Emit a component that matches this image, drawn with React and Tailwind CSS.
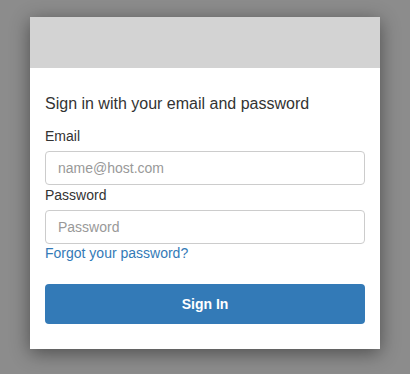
export default function App() {
  return (
    <div className="w-[410px] h-[374px] bg-[#8c8c8c] pt-[17px] pl-[30px]" style={{ fontFamily: '"Liberation Sans", Arial, sans-serif' }}>
      <div className="w-[350px] h-[332px] bg-white shadow-[0_4px_18px_rgba(0,0,0,0.45)] flex flex-col">
        <div className="h-[51px] bg-[#d3d3d3]"></div>
        <div className="px-[15px] pt-[26px] text-[#333]">
          <h2 className="text-[16px] leading-[20px] mb-[13px]">Sign in with your email and password</h2>
          <label className="block text-[14px] leading-[18px] mb-[6px]">Email</label>
          <input
            className="block w-[320px] h-[34px] border border-[#ccc] rounded-[4px] px-[12px] text-[14px] placeholder-[#999] outline-none"
            placeholder="name@host.com"
          />
          <label className="block text-[14px] leading-[18px] mt-[1px] mb-[6px]">Password</label>
          <input
            type="password"
            className="block w-[320px] h-[34px] border border-[#ccc] rounded-[4px] px-[12px] text-[14px] placeholder-[#999] outline-none"
            placeholder="Password"
          />
          <a className="block text-[14px] leading-[18px] text-[#337ab7]">Forgot your password?</a>
          <button className="mt-[22px] w-[320px] h-[40px] bg-[#337ab7] rounded-[4px] text-white text-[14px] font-bold">Sign In</button>
        </div>
      </div>
    </div>
  );
}
